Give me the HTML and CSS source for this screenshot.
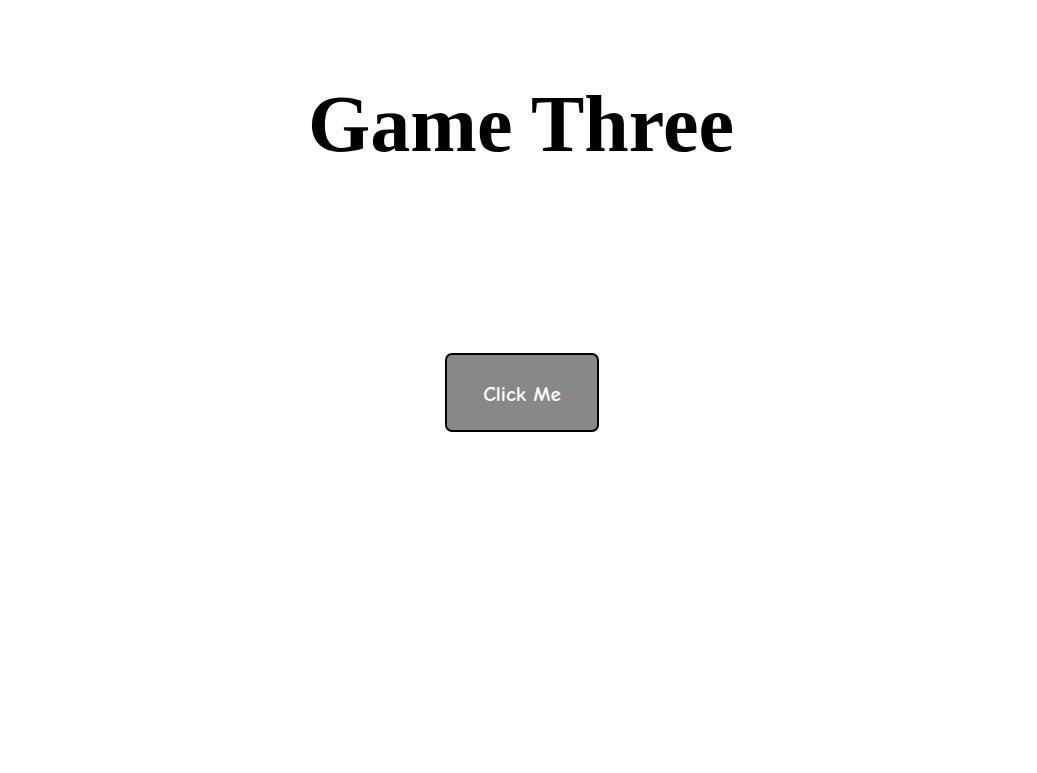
FILE: index.html
```html
<!DOCTYPE html>
<html>
<head>
<meta charset="utf-8">
<title>Game Three</title>
<link rel="stylesheet" href="styles.css">
</head>
<body>
<main class="page">
  <h1 class="title">Game Three</h1>
  <div class="action">
    <button class="btn" type="button">Click Me</button>
  </div>
</main>
</body>
</html>
```

FILE: styles.css
```css
html, body {
  margin: 0;
  background: #fff;
}
.page {
  padding-left: 5px;
  display: flex;
  flex-direction: column;
  align-items: center;
}
.title {
  font-family: "Liberation Serif", "Times New Roman", serif;
  font-weight: bold;
  font-size: 80px;
  line-height: 92px;
  margin: 78px 0 0;
  color: #000;
}
.action {
  margin-top: 183px;
  margin-left: 2px;
}
.btn {
  width: 154px;
  height: 79px;
  background: #888888;
  border: 2px solid #000;
  border-radius: 7px;
  color: #fff;
  font-family: "Comic Sans MS", "Comic Neue", "DejaVu Sans", sans-serif;
  font-size: 21px;
  font-weight: bold;
  padding: 2px 0 0;
  cursor: pointer;
}
```
